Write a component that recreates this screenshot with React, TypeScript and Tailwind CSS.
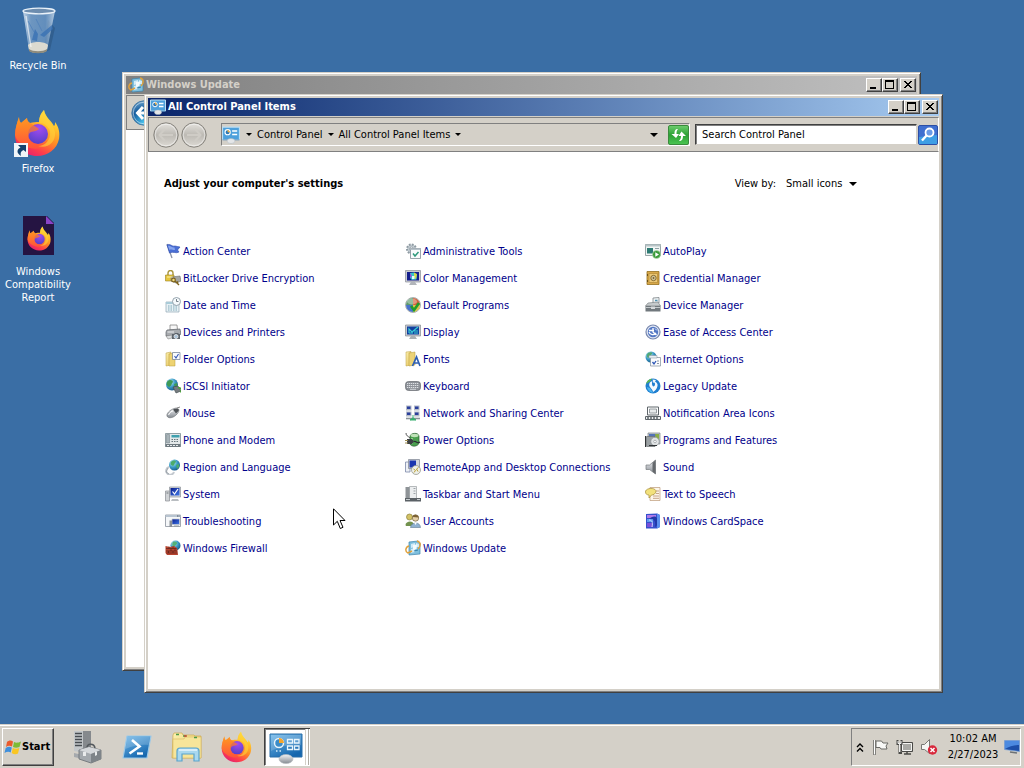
import type { ReactNode } from 'react';

type IconProps = { className?: string };

const raised =
  'border border-t-white border-l-white border-r-[#404040] border-b-[#404040] shadow-[inset_-1px_-1px_#808080] bg-[#d4d0c8]';

/* Gradients shared by every drawing on the page */
function Gradients() {
  return (
    <svg className="absolute w-0 h-0" aria-hidden="true">
      <defs>
        <linearGradient id="fxBody" x1="0.85" y1="0" x2="0.3" y2="1">
          <stop offset="0" stopColor="#fff44f" />
          <stop offset="0.3" stopColor="#ffc02c" />
          <stop offset="0.55" stopColor="#ff8a25" />
          <stop offset="0.8" stopColor="#ff3f4a" />
          <stop offset="1" stopColor="#e5206f" />
        </linearGradient>
        <linearGradient id="fxHead" x1="0" y1="0" x2="0.6" y2="1">
          <stop offset="0" stopColor="#ff9a20" />
          <stop offset="1" stopColor="#ff5a34" />
        </linearGradient>
        <radialGradient id="fxBall" cx="0.55" cy="0.2" r="0.9">
          <stop offset="0" stopColor="#a34bf0" />
          <stop offset="1" stopColor="#4c3fc4" />
        </radialGradient>
        <linearGradient id="glass" x1="0" x2="1" y1="0" y2="0">
          <stop offset="0" stopColor="#dfeaf5" stopOpacity="0.85" />
          <stop offset="0.25" stopColor="#8fb0d2" stopOpacity="0.6" />
          <stop offset="0.7" stopColor="#7da3cb" stopOpacity="0.6" />
          <stop offset="1" stopColor="#d5e2ef" stopOpacity="0.8" />
        </linearGradient>
        <linearGradient id="blue" x1="0" x2="0.6" y1="0" y2="1">
          <stop offset="0" stopColor="#6fb8ea" />
          <stop offset="1" stopColor="#1667ae" />
        </linearGradient>
        <linearGradient id="screen" x1="0" x2="1" y1="0" y2="1">
          <stop offset="0" stopColor="#0a1c8c" />
          <stop offset="1" stopColor="#3f78e8" />
        </linearGradient>
        <linearGradient id="green" x1="0" x2="0" y1="0" y2="1">
          <stop offset="0" stopColor="#6fce6f" />
          <stop offset="0.5" stopColor="#2ba034" />
          <stop offset="1" stopColor="#4cc552" />
        </linearGradient>
        <linearGradient id="steel" x1="0" x2="0" y1="0" y2="1">
          <stop offset="0" stopColor="#f2f3f5" />
          <stop offset="1" stopColor="#858b92" />
        </linearGradient>
        <linearGradient id="folder" x1="0" x2="1" y1="0" y2="1">
          <stop offset="0" stopColor="#fdf3b4" />
          <stop offset="1" stopColor="#e3bf53" />
        </linearGradient>
        <radialGradient id="globe" cx="0.35" cy="0.3" r="0.8">
          <stop offset="0" stopColor="#c6f1f7" />
          <stop offset="0.5" stopColor="#3c9cc8" />
          <stop offset="1" stopColor="#12507f" />
        </radialGradient>
        <radialGradient id="navOn" cx="0.5" cy="0.9" r="0.9">
          <stop offset="0" stopColor="#49c4ee" />
          <stop offset="0.6" stopColor="#145a9c" />
          <stop offset="1" stopColor="#6aa2cc" />
        </radialGradient>
        <linearGradient id="navOff" x1="0" x2="0" y1="0" y2="1">
          <stop offset="0" stopColor="#e4e2dd" />
          <stop offset="0.5" stopColor="#bdbab4" />
          <stop offset="1" stopColor="#dedbd5" />
        </linearGradient>
      </defs>
    </svg>
  );
}

function FirefoxArt() {
  return (
    <>
      <path
        d="M5 8C5 11 6 13 7 14C9 12 11 11 13 9C13 11 14 13 16 14C19 13 22 13 25 13C25 8 27 4 30 1C31 8 37 11 40 17C41 16 41 15 41 13C45 18 46 24 45 30C43 40 34 47 23 47C11 47 1 38 1 26C1 20 3 14 5 8Z"
        fill="url(#fxBody)"
      />
      <circle cx="24" cy="25" r="10" fill="url(#fxBall)" />
      <path
        d="M1 26C1 20 3 14 5 8C5 11 6 13 7 14C9 12 11 11 13 9C13 12 15 14 18 15C20 17 23 18 25 20C23 22 20 22 17 23C14 25 13 29 17 33C22 37 29 36 33 32C32 40 20 42 11 37C6 34 2 31 1 26Z"
        fill="url(#fxHead)"
        opacity="0.75"
      />
      <path d="M25 14C30 14 34 17 36 22C37 30 32 37 24 37C33 40 42 34 41 23C40 16 33 13 30 1C27 4 25 8 25 14Z" fill="#ffd33a" opacity="0.6" />
    </>
  );
}

function Firefox({ className }: IconProps) {
  return (
    <svg viewBox="0 0 48 48" className={className} aria-hidden="true">
      <FirefoxArt />
    </svg>
  );
}

function RecycleBin({ className }: IconProps) {
  return (
    <svg viewBox="0 0 48 48" className={className} aria-hidden="true">
      <path d="M34 14L41 22L36 44L30 46Z" fill="#16324f" opacity="0.25" />
      <path d="M9 5L15 44C17 48 31 48 33 44L41 5Z" fill="url(#glass)" />
      <path d="M14 39C17 35 31 35 34 39L33 44C31 48 17 48 15 44Z" fill="#dcdad0" />
      <path d="M15 43C19 46 29 46 33 43L33 45C30 48 18 48 15 45Z" fill="#8d8a7c" />
      <path d="M19 30L21 23L24 28L23 35L18 34ZM26 29L38 19L39 23L30 31Z" fill="#356fb3" opacity="0.75" />
      <path d="M14 15L20 26M22 13L28 25" stroke="#4c7fbb" opacity="0.7" />
      <ellipse cx="25" cy="5" rx="16" ry="2.8" fill="#6d8daf" stroke="#eaf2f9" strokeWidth="1.3" />
      <path d="M12 10L17 41" stroke="#fff" strokeWidth="1.4" opacity="0.6" />
    </svg>
  );
}

function FirefoxDesktop({ className }: IconProps) {
  return (
    <span className="relative inline-flex">
      <Firefox className={className} />
      <svg viewBox="0 0 14 14" className="absolute left-0 bottom-0 w-3.5 h-3.5" aria-hidden="true">
        <path d="M0 0H14V14H0Z" fill="#f1f5f8" />
        <path d="M4 2H12V9L9.5 7C7 8 6 10 7 13C2 10 3 6 6.5 4.500Z" fill="#14426f" />
      </svg>
    </span>
  );
}

function ReportFile({ className }: IconProps) {
  return (
    <svg viewBox="0 0 48 48" className={className} aria-hidden="true">
      <path d="M9 4H33L40 11V43H9Z" fill="#251442" />
      <path d="M32 4L40 12H32Z" fill="#8a44c8" />
      <svg x="13" y="14" width="25" height="25" viewBox="0 0 48 48">
        <FirefoxArt />
      </svg>
    </svg>
  );
}

function ControlPanelIcon({ className }: IconProps) {
  return (
    <svg viewBox="0 0 34 34" className={className} aria-hidden="true">
      <path d="M1 3H33V26H1Z" fill="url(#blue)" stroke="#2a6ea8" />
      <path d="M2 4H32V14C20 13 10 16 2 20Z" fill="#fff" opacity="0.18" />
      <circle cx="10" cy="12" r="4.5" fill="#3c8cc8" stroke="#e6f2fa" strokeWidth="1.5" />
      <path d="M10 12V7A5 5 0 0 1 15 12Z" fill="#f6a52c" />
      <path d="M18.5 8.5H23.5V12H18.5ZM25.5 8.5H30V12H25.5ZM18.5 15H23.5V18.5H18.5ZM25.5 15H30V18.5H25.5Z" fill="none" stroke="#e9f5fc" strokeWidth="1.3" />
      <path d="M7 20H8.5M10.5 20H12" stroke="#d4ebf8" strokeWidth="1.5" />
      <ellipse cx="17" cy="28" rx="7" ry="4.5" fill="url(#steel)" stroke="#b4b8bc" strokeWidth="0.6" />
    </svg>
  );
}

/* Title bar and breadcrumb version of the control panel icon */
function ControlPanelSmall({ className }: IconProps) {
  return (
    <svg viewBox="0 0 16 16" className={className} aria-hidden="true">
      <path d="M0.5 1H15.5V12H0.5Z" fill="#4da0dc" stroke="#b9dcf2" />
      <path d="M0.5 12.300H15.5" stroke="#2a6ea8" strokeWidth="0.6" />
      <circle cx="5" cy="5.5" r="2.3" fill="#2877b8" stroke="#fff" />
      <path d="M5 5.5V3L7.5 5.5Z" fill="#f6b13c" />
      <path d="M9 4.5H13.5M9 7.5H13.5" stroke="#fff" strokeWidth="1.4" />
      <ellipse cx="8" cy="13.3" rx="3.5" ry="2.3" fill="#e4e6e8" stroke="#a9b2ba" strokeWidth="0.4" />
    </svg>
  );
}

const icons: Record<string, ReactNode> = {
  flag: (
    <>
      <path d="M2 1L7 15" stroke="#8a93a8" strokeWidth="1.3" />
      <path d="M2 2C5 0 7 4 10 3C12 3 13 4 15 4L12.5 7L14 9C11 11 8 8 4.5 10Z" fill="#4a6fd4" stroke="#2d4cae" strokeWidth="0.6" />
      <path d="M3 3C5 2 7 5 9.5 4.5L10 7C7 7 6 6 4.5 7Z" fill="#86a4ee" />
    </>
  ),
  bitlocker: (
    <>
      <path d="M3 5V3A2 2 0 0 1 8 3V5" fill="none" stroke="#a8953c" strokeWidth="1.4" />
      <path d="M0.5 5H9V11H0.5Z" fill="#e6c63e" stroke="#9b7f1e" strokeWidth="0.6" />
      <path d="M6 7L15 6L16 11L11 13L6 11Z" fill="#a4a5a2" stroke="#6f706c" strokeWidth="0.6" />
      <circle cx="8.5" cy="10" r="1.8" fill="#f0dc84" stroke="#7e621a" strokeWidth="1.2" />
      <path d="M10 11L14 15M12 13L13 11.5" stroke="#7e621a" strokeWidth="1.4" />
      <path d="M2 7H7.5" stroke="#fbf0a8" />
    </>
  ),
  date: (
    <>
      <path d="M1 5H14V15H1Z" fill="#e8f1f5" stroke="#8fa8b4" strokeWidth="0.7" />
      <path d="M1 5H14V7H1Z" fill="#a9cbd8" />
      <path d="M3 9H12M3 11H12M3 13H12" stroke="#7ea9b8" strokeDasharray="1.5 1" />
      <circle cx="11.5" cy="4.5" r="4" fill="#f6fafc" stroke="#94a2ac" />
      <path d="M11.5 2V4.5H13.5" fill="none" stroke="#56646e" strokeWidth="0.8" />
    </>
  ),
  printer: (
    <>
      <path d="M5 1H12L12.5 6H5Z" fill="#f8f8f8" stroke="#777" strokeWidth="0.7" />
      <path d="M2 6L15 5L16 10L13 12H1V8Z" fill="#a7aaae" stroke="#60646a" strokeWidth="0.7" />
      <path d="M2.5 8H9" stroke="#eceef0" />
      <path d="M1 12L7 11V14L3 15Z" fill="#dcdedf" stroke="#777" strokeWidth="0.5" />
      <path d="M7 10H9L10 9H13L14 10H15V15H7Z" fill="#5d646c" />
      <circle cx="11" cy="12.5" r="2" fill="#a9c3d9" stroke="#eee" strokeWidth="0.8" />
    </>
  ),
  folderOptions: (
    <>
      <path d="M1 2L6 1V14L1 15Z" fill="url(#folder)" stroke="#b79a3c" strokeWidth="0.5" />
      <path d="M4 3L10 2V15H4Z" fill="#eed372" stroke="#b79a3c" strokeWidth="0.5" />
      <path d="M7.5 1.5H15V8.5H7.5Z" fill="#fafcff" stroke="#6a7a90" strokeWidth="0.7" />
      <path d="M9.5 5L11 7L13.5 3" fill="none" stroke="#3558b6" strokeWidth="1.1" />
    </>
  ),
  iscsi: (
    <>
      <circle cx="7" cy="6.5" r="6" fill="url(#globe)" />
      <path d="M2 4C4 1 8 2 8 4C6 6 7 8 4 9C2 8 1 6 2 4ZM9 6L12 5L12.5 8L10 10Z" fill="#3f9a56" />
      <path d="M8 9L13 8L16 13L11 15Z" fill="#767c80" stroke="#3b4348" strokeWidth="0.6" />
      <path d="M13 10A2 2 0 0 1 15 14" fill="none" stroke="#4aa23a" strokeWidth="1.5" />
    </>
  ),
  mouse: (
    <>
      <path d="M2 11C1 8 7 3 12 3C15 4 14 7 12 9C9 13 3 14 2 11Z" fill="url(#steel)" stroke="#73777b" strokeWidth="0.7" />
      <path d="M8 4.5L11 8.5L13.5 6C15 4 12 2.500 8 4.5Z" fill="#4d5155" />
      <path d="M3.5 10C5 7 7 6 8 6" stroke="#fff" fill="none" />
      <path d="M12 3L15 2" stroke="#888" />
    </>
  ),
  phone: (
    <>
      <path d="M0.5 1.5H15.5V14.5H0.5Z" fill="#e4e9ea" stroke="#7a8a90" strokeWidth="0.8" />
      <path d="M1.5 2.5H4.5V11H1.5Z" fill="#a7b3b8" stroke="#6c7a80" strokeWidth="0.5" />
      <path d="M6.5 3H14.5V5.5H6.5Z" fill="#3fa0ae" />
      <path d="M6.5 7.5H14M6.5 9.5H14" stroke="#66757b" strokeDasharray="1.5 1" />
      <path d="M0.5 12H15.5V15H0.5Z" fill="#6f7a80" />
      <path d="M2 13.5H14" stroke="#e6eaec" strokeDasharray="2 1" />
    </>
  ),
  region: (
    <>
      <circle cx="9.5" cy="6" r="5.5" fill="url(#globe)" />
      <path d="M6 3C8 1 11 1 11 3C9 4 10 6 8 7C6 6 5 5 6 3ZM11 6L14 5L14 8L12 10Z" fill="#4aab6a" />
      <path d="M4 8A4 4 0 1 0 9 13" fill="none" stroke="#c4c9cf" strokeWidth="2" />
      <path d="M3 9L1 13L4 15" fill="none" stroke="#8a929a" strokeWidth="0.7" />
    </>
  ),
  system: (
    <>
      <path d="M0.5 5H4.5V15H0.5Z" fill="#d0d3d6" stroke="#8a8e93" strokeWidth="0.7" />
      <path d="M1.5 7H3.5" stroke="#6f7478" />
      <path d="M4.5 1H15.5V11H4.5Z" fill="#d8dade" stroke="#8b8f98" strokeWidth="0.7" />
      <path d="M5.5 2H14.5V9.5H5.5Z" fill="url(#screen)" />
      <path d="M7.5 5.5L9.5 8L13 3" fill="none" stroke="#fff" strokeWidth="1.2" />
      <path d="M7 13H13L14 15H6Z" fill="#b9bdc1" />
    </>
  ),
  troubleshooting: (
    <>
      <path d="M0.5 2H15.5V13.5H0.5Z" fill="#f5f7f9" stroke="#8a929c" strokeWidth="0.8" />
      <path d="M0.5 2H15.5V4H0.5Z" fill="#b8c4d0" />
      <path d="M12 3H15" stroke="#4a5564" strokeDasharray="1 0.5" />
      <path d="M7 6H14.5V11.5H7Z" fill="url(#screen)" stroke="#c4c8cf" strokeWidth="0.7" />
      <path d="M4.5 7.5H7V14H4.5Z" fill="#8b9096" />
      <path d="M9 12.5H14V14H9Z" fill="#9aa0a6" />
    </>
  ),
  firewall: (
    <>
      <circle cx="10.5" cy="5.5" r="5" fill="url(#globe)" />
      <path d="M8 2C10 1 13 2 12 4C10 5 10 7 8 7C7 5 7 3 8 2Z" fill="#53b079" />
      <path d="M0.5 6L5 7L9 6L12 8L13 15H2L0.5 13Z" fill="#b8432f" />
      <path d="M1 8.5H11.5M1 11H12.5M1.5 13H12.5M4 6.5V8.5M8 6.5V8.5M6 8.5V11M10 8.5V11M3.5 11V13M8 11V13" stroke="#4d2018" strokeWidth="0.6" />
    </>
  ),
  admin: (
    <>
      <circle cx="6.5" cy="6" r="4.5" fill="#c3ccd2" stroke="#8f9ba3" strokeWidth="2" strokeDasharray="1.8 1.2" />
      <circle cx="6.5" cy="6" r="2" fill="#fff" stroke="#8f9ba3" strokeWidth="0.8" />
      <path d="M5.5 5.5H15.5V15.5H5.5Z" fill="#fafbfc" stroke="#828d95" strokeWidth="0.8" />
      <path d="M5.5 5.5H15.5V7H5.5Z" fill="#b7c2ca" />
      <path d="M8 10.5L10 13L13.5 9" fill="none" stroke="#2f9a7c" strokeWidth="1.5" />
    </>
  ),
  color: (
    <>
      <path d="M0.5 0.5H15.5V12H0.5Z" fill="#c9ccd2" stroke="#8b8e98" strokeWidth="0.7" />
      <path d="M2 2H14V10.5H2Z" fill="#131d8c" />
      <path d="M5 3L9 2.500L12 5L11.5 9.500L7 10L5 8Z" fill="#36c6ca" />
      <path d="M9 2.500L12 4L11 9.500L9 7Z" fill="#d4d84a" />
      <path d="M5 3L7 6L5 8Z" fill="#9c4fd4" />
      <path d="M7 6H9.5V9H7Z" fill="#e6fbff" />
      <path d="M6 12H10L12 15H4Z" fill="#b2b5ba" />
    </>
  ),
  defaults: (
    <>
      <circle cx="8" cy="8" r="7.5" fill="#d9dede" stroke="#8e9696" strokeWidth="0.7" />
      <path d="M8 8V1A7 7 0 0 1 15 8Z" fill="#d2603c" />
      <path d="M8 8H15A7 7 0 0 1 8 15Z" fill="#dcc44a" />
      <path d="M8 8V15A7 7 0 0 1 1 8Z" fill="#4a72cb" />
      <path d="M8 8H1A7 7 0 0 1 8 1Z" fill="#5c9a6c" />
      <ellipse cx="7" cy="4.5" rx="5" ry="3" fill="#fff" opacity="0.35" />
      <path d="M6 9L9 13L14 6" fill="none" stroke="#1f9c2c" strokeWidth="2.6" />
    </>
  ),
  display: (
    <>
      <path d="M0.5 1H15.5V12H0.5Z" fill="#c6cace" stroke="#868b92" strokeWidth="0.7" />
      <path d="M2 2.5H14V10.5H2Z" fill="#1240a0" />
      <path d="M4 9V5L7 8L13 3M4 9H8M8 7H13M9 9H13" fill="none" stroke="#39c9d4" strokeWidth="1.2" />
      <path d="M6 12H10L12 15H4Z" fill="#aaafb4" />
    </>
  ),
  fonts: (
    <>
      <path d="M1 1L6 0.5V14L1 15Z" fill="url(#folder)" stroke="#b79a3c" strokeWidth="0.5" />
      <path d="M4 2L10 1V14L4 15Z" fill="#ecd377" stroke="#b79a3c" strokeWidth="0.5" />
      <path d="M7.5 15L11.5 6L15 15M9 12H14" fill="none" stroke="#2f5fb4" strokeWidth="1.7" />
    </>
  ),
  keyboard: (
    <>
      <rect x="0.5" y="3.5" width="15" height="9" rx="3" fill="#8d9198" stroke="#666a70" strokeWidth="0.7" />
      <path d="M2 5.5H14M2 7.5H14M2 9.5H14" stroke="#dde0e4" strokeDasharray="1.3 0.7" />
      <path d="M5 11.3H11" stroke="#cfd3d8" />
    </>
  ),
  network: (
    <>
      <path d="M1 0.500H6.500V5.500H1ZM9 0.500H14.5V5.500H9ZM1 6.500H6.500V11.500H1ZM9 6.500H14.5V11.500H9Z" fill="#b4bac8" />
      <path d="M2 1.5H5.5V4H2ZM10 1.5H13.5V4H10ZM2 7.5H5.5V10H2ZM10 7.5H13.5V10H10Z" fill="#2a3f9c" />
      <path d="M1 13.5H15" stroke="#8a9399" strokeWidth="1.6" />
      <path d="M8 10V13L5 15H11L8 13" fill="#37ae6e" stroke="#37ae6e" />
    </>
  ),
  power: (
    <>
      <path d="M5 4C6 1 13 0 14 4V11C13 15 6 15 5 12Z" fill="#4aa04f" stroke="#2b5c30" strokeWidth="0.7" />
      <ellipse cx="9.5" cy="3.5" rx="4" ry="1.7" fill="#bfe2b8" />
      <path d="M7 6V12" stroke="#a4dba0" strokeWidth="1.5" />
      <path d="M1 1C1 4 3 4 5 6" fill="none" stroke="#555" />
      <path d="M2 7H7L9 9.5L7 12H2Z" fill="#3d4144" />
      <path d="M0 8.5H3M0 11H3" stroke="#9d8b50" strokeWidth="1.2" />
      <path d="M9 9.5C12 9 12 12 15 10" fill="none" stroke="#2d3134" strokeWidth="1.2" />
    </>
  ),
  remote: (
    <>
      <path d="M0.5 3H5V13H0.5Z" fill="#edf0f6" stroke="#7c88a8" strokeWidth="0.8" />
      <path d="M3.5 0.5H14.5V9.5H3.5Z" fill="#d3d6dc" stroke="#7c8290" strokeWidth="0.7" />
      <path d="M4.5 1.5H11V8.5H4.5Z" fill="#1b36b0" />
      <circle cx="11" cy="11" r="4.5" fill="#eef0ea" stroke="#8c8f85" strokeWidth="0.7" />
      <path d="M8.5 10L10.5 11.5L9 13.5M13.5 8.5L11.5 10L13 12.5" fill="none" stroke="#b99d2e" />
    </>
  ),
  taskbar: (
    <>
      <path d="M0.5 1H5V13H0.5Z" fill="#8e9397" />
      <path d="M4.5 0.5H11.5V12.5H4.5Z" fill="#eceeef" stroke="#8b9094" strokeWidth="0.6" />
      <path d="M8.5 2.5H10.5M8.5 5H10.5M8.5 7.5H10.5" stroke="#9ea4a8" />
      <path d="M0 12H16V15.5H0Z" fill="#5b6166" />
      <path d="M1 13.5H5M12 13.5H15" stroke="#c5cacd" />
    </>
  ),
  users: (
    <>
      <circle cx="4.5" cy="4" r="3" fill="#d3c266" stroke="#7d7430" strokeWidth="0.6" />
      <path d="M0.5 12C0.5 8 8 7 8.5 11L8 13H1Z" fill="#72924e" />
      <circle cx="10.5" cy="5" r="3.2" fill="#e4cfa8" stroke="#75633d" strokeWidth="0.7" />
      <path d="M7.5 4C8 1 13 1 13.7 4.5Z" fill="#7b6133" />
      <path d="M5.5 14.5C6 9 15 8 15.5 14.5Z" fill="#8fb1d0" stroke="#5f7b94" strokeWidth="0.6" />
      <path d="M9 9.5L10.5 12L12 9.5Z" fill="#fff" />
    </>
  ),
  update: (
    <>
      <path d="M4 2L13 1L15 3V14L4 15Z" fill="#7fc0df" stroke="#3d84ac" strokeWidth="0.7" />
      <path d="M6 4L10 3V7L6 8ZM11 3L14 4V7H11ZM6 9L10 8V12L6 13Z" fill="#d3ebf6" />
      <path d="M8 5L12 4.5L11.5 9L8 10Z" fill="#f3fafc" />
      <path d="M12 1C16 2 16 6 13 9M4 6C0 7 0 12 3 13L7 11" fill="none" stroke="#e0a13c" strokeWidth="1.5" />
      <path d="M9 11L13 10" stroke="#2f7ea8" />
    </>
  ),
  autoplay: (
    <>
      <path d="M0.5 1.5H15.5V12.5H0.5Z" fill="#f1f5f4" stroke="#7f8f92" strokeWidth="0.8" />
      <path d="M0.5 1.5H15.5V3.5H0.5Z" fill="#b9c5c8" />
      <path d="M2 5H8V10.5H2Z" fill="#2c7a72" />
      <path d="M10 5.5H14" stroke="#8fa0a4" />
      <circle cx="11.5" cy="11.5" r="4" fill="#3b9a3a" stroke="#bde0b8" strokeWidth="0.6" />
      <path d="M10.3 9.3L14 11.5L10.3 13.7Z" fill="#fff" />
    </>
  ),
  credential: (
    <>
      <path d="M2 1.5H14V14.5H2Z" fill="#d9a849" stroke="#94701f" strokeWidth="0.8" />
      <path d="M4 3.5H12.5V12.5H4Z" fill="#ecc877" stroke="#a98331" strokeWidth="0.6" />
      <circle cx="8.5" cy="8" r="2.7" fill="#cfc4a0" stroke="#7e6224" strokeWidth="0.9" />
      <circle cx="8.5" cy="8" r="0.9" fill="#7e6224" />
      <path d="M2.5 4V6M2.5 10V12" stroke="#6d5216" />
    </>
  ),
  device: (
    <>
      <path d="M8 1L14 0.5V6L8 7Z" fill="#f0f3f4" stroke="#7c8488" strokeWidth="0.8" />
      <path d="M10 3.5H12.5" stroke="#4e92b4" strokeWidth="1.5" />
      <path d="M3 6L13 5L15.5 9H0.5Z" fill="#c6cacc" stroke="#70777b" strokeWidth="0.6" />
      <path d="M0.5 9H15.5V14.5H0.5Z" fill="#71787d" />
      <path d="M1 10.5H15" stroke="#c3c8cb" />
      <path d="M6 9.5H10V12H6Z" fill="#d6d9db" />
    </>
  ),
  ease: (
    <>
      <circle cx="8" cy="8" r="7" fill="#dfe6f4" stroke="#7787ad" strokeWidth="1.2" />
      <circle cx="8" cy="8" r="5.2" fill="#5377c4" />
      <path d="M4 6.5H9M8 4V8L11.5 11M4 8A4 4 0 0 0 11 9" fill="none" stroke="#fff" strokeWidth="1.3" />
      <path d="M10 4.5L12 6.5" stroke="#e3ebfb" />
    </>
  ),
  internet: (
    <>
      <circle cx="6" cy="6" r="5.5" fill="url(#globe)" />
      <path d="M3 2C5 1 8 1 7 3C5 4 6 6 3 7C1 5 2 3 3 2Z" fill="#52a875" />
      <path d="M5.5 6.5H15.5V15H5.5Z" fill="#fafbfd" stroke="#7e8c9a" strokeWidth="0.7" />
      <path d="M4 4.5H12V7H4Z" fill="#e9eef2" stroke="#7e8c9a" strokeWidth="0.5" />
      <path d="M7.5 11L9 13L11 10" fill="none" stroke="#2b55b5" strokeWidth="1.3" />
      <path d="M12 10H14M12 12.5H14" stroke="#8c98a4" />
    </>
  ),
  legacy: (
    <>
      <circle cx="8" cy="8" r="7.5" fill="#1f7fd0" />
      <path d="M1 6A7.5 7.5 0 0 1 7 0.500L5.5 3Z" fill="#5fb84a" />
      <path d="M2 9A6.500 6.500 0 0 0 8 15L5 10Z" fill="#4cb4f0" />
      <path d="M7.5 3C4 4 3.500 7 5 9C6 11 8 12 8 14C10 13 12 11 12.500 8C13 6 11.500 4 10 3.500L11 2L7.500 1.500L8.500 5L9.500 4.500C10.500 6 10 8 8.500 8.500C7 8 6.500 5 7.5 3Z" fill="#f4fafe" />
    </>
  ),
  notification: (
    <>
      <path d="M2.5 2H13.5V10H2.5Z" fill="#fff" stroke="#5f666b" />
      <path d="M4.5 4H11.5V8H4.5Z" fill="#e8ebec" stroke="#81898e" strokeWidth="0.8" />
      <path d="M0.5 11.5H15.5V14.5H0.5Z" fill="#eef0f0" stroke="#5f666b" />
      <path d="M2 13H14" stroke="#5f666b" strokeWidth="1.3" strokeDasharray="2 1" />
    </>
  ),
  programs: (
    <>
      <path d="M3 1H15V12H3Z" fill="#c5ccd1" stroke="#7b8286" strokeWidth="0.7" />
      <path d="M4 2H14V4.5H4Z" fill="#5273b8" />
      <path d="M10 2H14V10L11 7Z" fill="#8bae45" />
      <path d="M1.5 4.5H10V14.5H1.5Z" fill="#9aa0a3" stroke="#5b6063" strokeWidth="0.6" />
      <circle cx="10" cy="9.5" r="4.2" fill="#e2e5e6" stroke="#868b8e" strokeWidth="0.6" />
      <circle cx="10" cy="9.5" r="1.3" fill="#fff" stroke="#868b8e" strokeWidth="0.6" />
      <path d="M0.5 4V15M4 13.5H12" stroke="#303436" />
    </>
  ),
  sound: (
    <>
      <path d="M1 6H4.500L10.5 1V15L4.500 10.5H1Z" fill="url(#steel)" stroke="#777b7e" strokeWidth="0.7" />
      <path d="M7.5 4L10.5 1V15L7.5 12.5Z" fill="#65696d" />
    </>
  ),
  speech: (
    <>
      <path d="M5 1.5H15V14.5H5Z" fill="#fdf6ea" stroke="#bb9a78" strokeWidth="0.7" />
      <path d="M11 5H14M11 7.5H14M8 10H14M8 12.3H14" stroke="#c6a489" />
      <path d="M0.5 6C0 2 10 1 11 5C11 8 8 9 6.5 9L4 12V9C2 9 0.5 8 0.5 6Z" fill="#f2e17c" stroke="#a58b35" strokeWidth="0.7" />
    </>
  ),
  cardspace: (
    <>
      <path d="M1 1L12 0.5L15 2V14L12 15.5H1Z" fill="#3550cc" />
      <path d="M2 2H11V5H2Z" fill="#b07ae8" />
      <path d="M2 6H8V9H2Z" fill="#5f9cf0" />
      <path d="M2 10H8V14H2Z" fill="#7a4fd8" />
      <path d="M4 6C9 5 11 8 10 14C14 12 14 7 11 4C9 3 6 4 4 6Z" fill="#2238a8" />
      <path d="M4 7C7 7 8 9 7 14" fill="none" stroke="#c9dcff" />
      <path d="M12 0.5L15 2V14L12 15.5Z" fill="#5a8fee" />
    </>
  ),
};

function Icon({ name }: { name: string }) {
  return (
    <svg viewBox="0 0 16 16" className="w-4 h-4 shrink-0" aria-hidden="true">
      {icons[name]}
    </svg>
  );
}

const items = [
  ['Action Center', 'flag'],
  ['Administrative Tools', 'admin'],
  ['AutoPlay', 'autoplay'],
  ['BitLocker Drive Encryption', 'bitlocker'],
  ['Color Management', 'color'],
  ['Credential Manager', 'credential'],
  ['Date and Time', 'date'],
  ['Default Programs', 'defaults'],
  ['Device Manager', 'device'],
  ['Devices and Printers', 'printer'],
  ['Display', 'display'],
  ['Ease of Access Center', 'ease'],
  ['Folder Options', 'folderOptions'],
  ['Fonts', 'fonts'],
  ['Internet Options', 'internet'],
  ['iSCSI Initiator', 'iscsi'],
  ['Keyboard', 'keyboard'],
  ['Legacy Update', 'legacy'],
  ['Mouse', 'mouse'],
  ['Network and Sharing Center', 'network'],
  ['Notification Area Icons', 'notification'],
  ['Phone and Modem', 'phone'],
  ['Power Options', 'power'],
  ['Programs and Features', 'programs'],
  ['Region and Language', 'region'],
  ['RemoteApp and Desktop Connections', 'remote'],
  ['Sound', 'sound'],
  ['System', 'system'],
  ['Taskbar and Start Menu', 'taskbar'],
  ['Text to Speech', 'speech'],
  ['Troubleshooting', 'troubleshooting'],
  ['User Accounts', 'users'],
  ['Windows CardSpace', 'cardspace'],
  ['Windows Firewall', 'firewall'],
  ['Windows Update', 'update'],
];

function Caret() {
  return (
    <svg viewBox="0 0 8 4" className="w-2 h-1 shrink-0" aria-hidden="true">
      <path d="M0 0H8L4 4Z" fill="#000" />
    </svg>
  );
}

function SmallCaret() {
  return (
    <svg viewBox="0 0 6 3" className="w-1.5 h-[3px] shrink-0" aria-hidden="true">
      <path d="M0 0H6L3 3Z" fill="#000" />
    </svg>
  );
}

function CaptionButton({ label, children }: { label: string; children: ReactNode }) {
  return (
    <button aria-label={label} className={`w-4 h-3.5 flex items-center justify-center ${raised}`}>
      <svg viewBox="0 0 12 10" className="w-3 h-2.5 shrink-0" shapeRendering="crispEdges" aria-hidden="true">
        {children}
      </svg>
    </button>
  );
}

type WindowProps = {
  title: string;
  icon: ReactNode;
  barClass: string;
  titleClass: string;
  className: string;
  children: ReactNode;
};

function Window({ title, icon, barClass, titleClass, className, children }: WindowProps) {
  return (
    <section
      className={`absolute flex flex-col p-[3px] bg-[#d4d0c8] border border-t-[#d4d0c8] border-l-[#d4d0c8] border-r-[#404040] border-b-[#404040] shadow-[inset_1px_1px_#fff,inset_-1px_-1px_#808080] ${className}`}
    >
      <header className={`flex items-center h-[18px] pl-0.5 pr-px gap-0.5 bg-linear-to-r ${barClass}`}>
        {icon}
        <h1 className={`flex-1 font-bold leading-4 ${titleClass}`}>{title}</h1>
        <div className="flex">
          <CaptionButton label="Minimize">
            <path d="M2 7H8V9H2Z" />
          </CaptionButton>
          <CaptionButton label="Maximize">
            <path d="M1 0H10V9H1ZM2 2V8H9V2Z" fillRule="evenodd" />
          </CaptionButton>
        </div>
        <CaptionButton label="Close">
          <path d="M2 1H4V2H5V3H7V2H8V1H10V2H9V3H8V4H7V5H8V6H9V7H10V8H8V7H7V6H5V7H4V8H2V7H3V6H4V5H5V4H4V3H3V2H2Z" />
        </CaptionButton>
      </header>
      {children}
    </section>
  );
}

function NavButton({ label, on, d }: { label: string; on?: boolean; d: string }) {
  return (
    <button aria-label={label} className="shrink-0">
      <svg viewBox="0 0 26 26" className="w-[26px] h-[26px]" aria-hidden="true">
        <circle cx="13" cy="13" r="12.2" fill={on ? 'url(#navOn)' : 'url(#navOff)'} stroke={on ? '#4c7ba3' : '#85827c'} />
        <circle cx="13" cy="13" r="10.8" fill="none" stroke="#fff" opacity="0.5" />
        <path d={d} fill="none" stroke={on ? '#fff' : '#cfccc6'} strokeWidth={on ? 3 : 2} />
      </svg>
    </button>
  );
}

const backArrow = 'M20 13H7M12 7L6.5 13L12 19';
const forwardArrow = 'M6 13H19M14 7L19.5 13L14 19';
const toolbar = 'mt-px flex items-center h-[35px] pl-1 border border-t-[#808080] border-l-[#808080] border-r-white border-b-[#808080]';

function AddressBar() {
  return (
    <nav aria-label="Address" className="flex-1 ml-3.5 mr-[5px] h-[23px] flex items-center border border-t-[#808080] border-l-[#808080] border-r-white border-b-white">
      <ControlPanelSmall className="w-[18px] h-[18px] mr-1.5" />
      <ol className="flex-1 flex items-center gap-[5px]">
        <li className="flex items-center gap-[5px]">
          <SmallCaret />
          <a href="#control-panel">Control Panel</a>
          <SmallCaret />
        </li>
        <li className="flex items-center gap-[5px]">
          <a href="#all-items">All Control Panel Items</a>
          <SmallCaret />
        </li>
      </ol>
      <button aria-label="Previous locations" className="px-2.5 h-full flex items-center">
        <Caret />
      </button>
      <button aria-label="Refresh" className="shrink-0">
        <svg viewBox="0 0 21 20" className="w-[21px] h-5" aria-hidden="true">
          <rect x="0.5" y="0.5" width="20" height="19" rx="1.5" fill="url(#green)" stroke="#3a8a3c" />
          <path d="M10 4C7 4 6.5 6 6.5 9H3.5L8 13L11 9H8.5C8.5 7 8.5 6 10 4Z" fill="#fff" />
          <path d="M11 16C14 16 15 14 15 11H18L13.5 6.5L10.5 11H13C13 13 12.5 14.5 11 16Z" fill="#fff" />
        </svg>
      </button>
    </nav>
  );
}

function SearchBox() {
  return (
    <form className="flex items-center shrink-0" onSubmit={(e) => e.preventDefault()}>
      <input
        type="text"
        aria-label="Search Control Panel"
        placeholder="Search Control Panel"
        className="w-[222px] h-[21px] px-1.5 bg-white border border-t-[#404040] border-l-[#404040] border-r-[#d4d0c8] border-b-[#d4d0c8] shadow-[inset_1px_1px_#808080] placeholder:text-black outline-none"
      />
      <button aria-label="Search" className="ml-px">
        <svg viewBox="0 0 20 20" className="w-5 h-5" aria-hidden="true">
          <rect x="0.5" y="0.5" width="19" height="19" rx="1.5" fill="#3f6fd0" stroke="#2c4fa6" />
          <path d="M1 12L19 10V19H1Z" fill="#3fb2ec" opacity="0.7" />
          <circle cx="11.5" cy="7.5" r="4" fill="#6a9ae6" stroke="#fff" strokeWidth="1.8" />
          <path d="M8.5 10.5L4 15.5" stroke="#fff" strokeWidth="2.4" />
        </svg>
      </button>
    </form>
  );
}

function DesktopIcon({ label, children }: { label: string; children: ReactNode }) {
  return (
    <button className="w-[76px] min-h-[103px] pt-1.5 px-1 flex flex-col items-center gap-[5px] text-white leading-[13px]">
      {children}
      <span>{label}</span>
    </button>
  );
}

function TaskbarButton({ label, children }: { label: string; children: ReactNode }) {
  return (
    <button aria-label={label} className="w-[46px] flex items-center justify-center">
      {children}
    </button>
  );
}

function Taskbar() {
  return (
    <footer className="flex h-11 pt-[3px] pb-0.5 pl-0.5 pr-[3px] bg-[#d4d0c8] border-t border-[#d4d0c8] shadow-[inset_0_1px_#fff]">
      <button className={`w-[52px] pl-px flex items-center font-bold ${raised}`}>
        <svg viewBox="0 0 18 16" className="w-[18px] h-4 shrink-0" aria-hidden="true">
          <path d="M3 3C5 1 7 1 9 2.5L8 7.5C6 6.5 4 6.5 2 8Z" fill="#ea5a2c" />
          <path d="M10 3C12 4 14 4 17 2.5L15.5 8C13 9 11 9 9 8Z" fill="#7dbb35" />
          <path d="M1.7 9C4 7.5 6 7.5 7.8 8.5L6.7 13.5C5 12.5 3 12.5 0.5 14Z" fill="#3f8fdc" />
          <path d="M8.8 9C11 10 13 10 15.3 9L14 14.5C12 15.5 10 15.5 7.7 14Z" fill="#f9c623" />
        </svg>
        Start
      </button>

      <div className="flex gap-1 ml-2.5">
        <TaskbarButton label="Server Manager">
          <svg viewBox="0 0 32 34" className="w-8 h-[34px]" aria-hidden="true">
            <path d="M3 1H13V23L3 21Z" fill="#c3c7ca" />
            <path d="M12 1H20V25L12 23Z" fill="#85898d" />
            <path d="M4 3.5H11M4 6.5H11M4 9.5H11M4 12.5H11M4 15.5H11" stroke="#474c51" strokeWidth="1.3" />
            <path d="M3 23L12 25V29L3 27Z" fill="#a5a9ad" />
            <path d="M16 18C16 13 23 13 24 18" fill="none" stroke="#53585d" strokeWidth="1.6" />
            <path d="M8 20L18 17L30 20V29L20 33L8 29Z" fill="#a4a9ae" stroke="#676c71" strokeWidth="0.8" />
            <path d="M8 20L18 17L30 20L20 24Z" fill="#d5d8db" />
            <path d="M20 24V33L30 29V20Z" fill="#7e8489" />
            <path d="M12 22H15V26H12ZM24 22L26 21.5V25L24 26Z" fill="#e9ebec" />
          </svg>
        </TaskbarButton>
        <TaskbarButton label="PowerShell">
          <svg viewBox="0 0 32 26" className="w-8 h-[26px]" aria-hidden="true">
            <path d="M6 2H30L26 24H2Z" fill="url(#blue)" stroke="#9cc9e8" strokeWidth="1.2" strokeLinejoin="round" />
            <path d="M6.5 3H29L27.5 11C20 10 11 12 4.5 15Z" fill="#fff" opacity="0.18" />
            <path d="M11 6L18.5 12.5L8.5 19.5" fill="none" stroke="#fff" strokeWidth="2.6" />
            <path d="M16 19.5H22" stroke="#fff" strokeWidth="2.4" />
          </svg>
        </TaskbarButton>
        <TaskbarButton label="Windows Explorer">
          <svg viewBox="0 0 34 32" className="w-[34px] h-8" aria-hidden="true">
            <path d="M3 4L4 2H12L13 4H24L25 5H31V27H2Z" fill="url(#folder)" stroke="#cda94a" strokeWidth="0.7" />
            <path d="M3 8H14L15 6H31V27H3Z" fill="#f7e59a" stroke="#d9bb62" strokeWidth="0.6" />
            <path d="M6 3.5H9M13 5H16M24 6.5H27" stroke="#4c9a4a" strokeWidth="1.5" />
            <path d="M14 5H17" stroke="#c9503c" strokeWidth="1.5" />
            <path d="M7 20C7 17 9 17 10 17H26C28 17 29 18 29 20V30H24V23H12V30H7Z" fill="#a9d8ee" stroke="#5ba4cc" strokeWidth="1.2" />
            <path d="M9 19H27" stroke="#e8f6fc" strokeWidth="1.5" />
          </svg>
        </TaskbarButton>
        <TaskbarButton label="Firefox">
          <Firefox className="w-8 h-8" />
        </TaskbarButton>
        <button
          aria-label="All Control Panel Items"
          className="w-[46px] pr-[5px] flex border-y border-l border-t-[#404040] border-l-[#404040] border-b-white shadow-[inset_-1px_0_#fff,inset_-2px_0_#b0aca4,inset_-4px_0_#fff]"
        >
          <span className="flex-1 h-full flex items-center justify-center bg-white border-t border-l border-[#808080]">
            <ControlPanelIcon className="w-[34px] h-[34px]" />
          </span>
        </button>
      </div>

      <div className="ml-auto flex items-center gap-2 pl-1 border border-t-[#808080] border-l-[#808080] border-r-white border-b-white">
        <button aria-label="Show hidden icons">
          <svg viewBox="0 0 8 9" className="w-2 h-[9px]" aria-hidden="true">
            <path d="M1 4L4 1L7 4M1 8.5L4 5.5L7 8.5" fill="none" stroke="#000" strokeWidth="1.4" />
          </svg>
        </button>
        <div className="flex items-center gap-1.5">
          <button aria-label="Action Center">
            <svg viewBox="0 0 18 18" className="w-[18px] h-[18px]" aria-hidden="true">
              <path d="M2.5 2V17" stroke="#6a6a66" strokeWidth="2.5" />
              <path d="M2.5 2V16.5" stroke="#fff" />
              <path d="M4 3H9.5L11 5H16L14 8L15 11H9L8 9.5H4Z" fill="#f8f8f6" stroke="#6a6a66" />
            </svg>
          </button>
          <button aria-label="Network">
            <svg viewBox="0 0 18 18" className="w-[18px] h-[18px]" aria-hidden="true">
              <path d="M5.5 4.500H16.5V13.5H5.5Z" fill="#a9a9a5" stroke="#494946" />
              <path d="M6.5 5.500H15.5V12.5H6.5Z" fill="none" stroke="#f5f5f3" />
              <path d="M8 16H15M11 14V16" stroke="#494946" strokeWidth="1.5" />
              <path d="M1.5 2V6H5.5V2M3.5 6V15H6" fill="none" stroke="#494946" strokeWidth="2" />
              <path d="M2 3V5.5H5V3M3.5 6V14" fill="none" stroke="#fff" strokeWidth="0.9" />
            </svg>
          </button>
          <button aria-label="Volume muted">
            <svg viewBox="0 0 18 18" className="w-[18px] h-[18px]" aria-hidden="true">
              <path d="M1.5 6.5H4.5L9.5 1.5V15.5L4.5 11.5H1.5Z" fill="#f5f5f3" stroke="#777773" />
              <circle cx="12.5" cy="12" r="4.7" fill="#d8283c" />
              <path d="M10.5 10L14.5 14M14.5 10L10.5 14" stroke="#fff" strokeWidth="1.5" />
            </svg>
          </button>
        </div>
        <button className="w-[54px] flex flex-col items-center leading-4">
          <time>10:02 AM</time>
          <time>2/27/2023</time>
        </button>
        <button aria-label="Show desktop" className="-ml-1">
          <svg viewBox="0 0 16 14" className="w-4 h-3.5" aria-hidden="true">
            <path d="M0.5 0.5H15.5V11.5L0.5 9.5Z" fill="#1d4fa8" stroke="#7da6dc" strokeWidth="0.7" />
            <path d="M1 1H15V5C9 5 5 7 1 9Z" fill="#4c8ae0" />
            <path d="M6 12L13 13" stroke="#6d7276" strokeWidth="1.5" />
          </svg>
        </button>
      </div>
    </footer>
  );
}

export default function App() {
  return (
    <div className="min-h-screen flex flex-col overflow-hidden bg-[#3a6ea5] text-black text-[11px] leading-4 font-['Tahoma','DejaVu_Sans_Condensed','DejaVu_Sans',sans-serif]">
      <Gradients />

      <main className="relative flex-1 flex flex-col">
        <div className="flex flex-col items-start">
          <DesktopIcon label="Recycle Bin">
            <RecycleBin className="w-12 h-12" />
          </DesktopIcon>
          <DesktopIcon label="Firefox">
            <FirefoxDesktop className="w-12 h-12" />
          </DesktopIcon>
          <DesktopIcon label="Windows Compatibility Report">
            <ReportFile className="w-12 h-12" />
          </DesktopIcon>
        </div>

        <Window
          title="Windows Update"
          icon={<Icon name="update" />}
          barClass="from-[#808080] to-[#c0c0c0]"
          titleClass="text-[#d4d0c8]"
          className="left-[122px] right-[103px] top-[72px] bottom-[53px]"
        >
          <div className={toolbar}>
            <NavButton label="Back" on d={backArrow} />
          </div>
          <div className="flex-1 bg-white" />
        </Window>

        <Window
          title="All Control Panel Items"
          icon={<ControlPanelSmall className="w-4 h-4" />}
          barClass="from-[#0a246a] to-[#a6caf0]"
          titleClass="text-white"
          className="left-[144px] right-[81px] top-[94px] bottom-[31px]"
        >
          <div className={toolbar}>
            <div className="flex gap-0.5">
              <NavButton label="Back" d={backArrow} />
              <NavButton label="Forward" d={forwardArrow} />
            </div>
            <AddressBar />
            <SearchBox />
          </div>

          <div className="flex-1 px-4 pt-6 bg-white overflow-hidden">
            <div className="flex items-center justify-between mr-[66px]">
              <h2 className="font-bold">Adjust your computer's settings</h2>
              <div className="flex items-center gap-2.5">
                <label htmlFor="view-by">View by:</label>
                <span className="relative flex items-center">
                  <select id="view-by" className="appearance-none bg-transparent pr-3.5 outline-none">
                    <option>Small icons</option>
                    <option>Large icons</option>
                    <option>Category</option>
                  </select>
                  <span className="absolute right-0 pointer-events-none">
                    <Caret />
                  </span>
                </span>
              </div>
            </div>

            <ul className="mt-[46px] ml-px grid grid-cols-[repeat(3,240px)]">
              {items.map(([label, icon]) => (
                <li key={label} className="h-[27px] flex items-center">
                  <a href="#item" className="flex items-center gap-0.5 text-[#00008b]">
                    <span className="pb-0.5">
                      <Icon name={icon} />
                    </span>
                    {label}
                  </a>
                </li>
              ))}
            </ul>
          </div>
        </Window>

        {/* Mouse pointer */}
        <svg viewBox="0 0 13 22" className="absolute left-[333px] top-[508px] w-[13px] h-[22px] pointer-events-none" aria-hidden="true">
          <path d="M0.5 0.8V17L4.3 13.3L7.3 20.5L10 19.3L7 12.5H12Z" fill="#fff" stroke="#000" />
        </svg>
      </main>

      <Taskbar />
    </div>
  );
}
